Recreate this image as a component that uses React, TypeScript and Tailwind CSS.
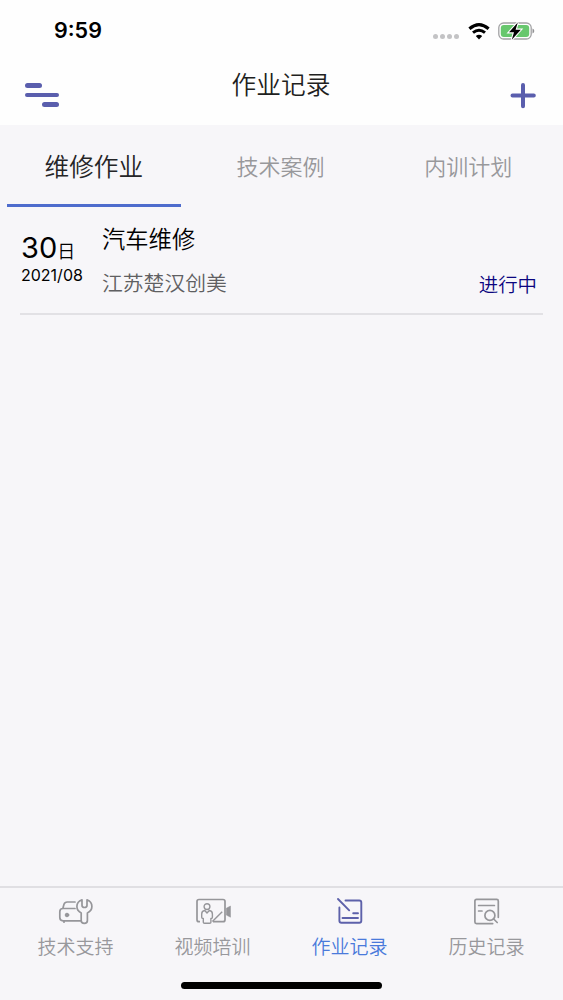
import type { ReactNode } from "react";

const tabs = [
  { label: "维修作业", active: true },
  { label: "技术案例", active: false },
  { label: "内训计划", active: false },
];

const records = [
  { day: "30", month: "2021/08", title: "汽车维修", company: "江苏楚汉创美", status: "进行中" },
];

function SupportIcon() {
  return (
    <svg width="36" height="30" viewBox="0 0 36 30" fill="none" stroke="#96969a" strokeWidth="1.7" strokeLinecap="round" strokeLinejoin="round">
      <path d="M17 5H9.2Q6.8 5 6 7.2L4.8 11.5M17 11.5H5Q1.8 11.5 1.8 14.7V20.6Q1.8 23.8 5 23.8H23M6 24v1.2" />
      <circle cx="9" cy="18" r="1.8" fill="#96969a" strokeWidth="1" />
      <path d="M24 2.8C20.8 4 18.9 6.6 18.9 9.4C18.9 12.4 20.6 14.5 23.2 15.9V23.4Q23.2 26.3 26.3 26.3Q29.4 26.3 29.4 23.4V15.9C32.2 14.5 33.9 12.3 33.9 9.4C33.9 6.5 32 4 29 2.8V8.2Q29 10.5 26.5 10.5Q24 10.5 24 8.2Z" />
    </svg>
  );
}

function VideoIcon() {
  return (
    <svg width="36" height="30" viewBox="0 0 36 30" fill="none" stroke="#96969a" strokeWidth="1.4" strokeLinejoin="round">
      <path d="M5 24.7H4Q2 24.7 2 22.7V4.5Q2 2.5 4 2.5H28Q30 2.5 30 4.5V22.7Q30 24.7 28 24.7H18" strokeWidth="1.7" />
      <path d="M31.3 11.2L35.5 9V20.2L31.3 18Z" fill="#96969a" strokeWidth=".5" />
      <circle cx="12" cy="9.6" r="2.9" />
      <path d="M9.8 13.5Q6.7 13.9 6.7 17V20.3Q6.7 21.5 8.3 21.5V25.3Q8.3 26.2 9.5 26.2H14.7Q15.9 26.2 15.9 25.3V21.5Q17.4 21.5 17.4 20.2V17Q17.4 13.9 14.3 13.5L12 16ZM17.4 24.4L27.2 14.7" />
    </svg>
  );
}

function RecordIcon() {
  return (
    <svg width="36" height="30" viewBox="0 0 36 30" fill="none" stroke="#5d61aa" strokeWidth="1.9" strokeLinecap="round" strokeLinejoin="round">
      <path d="M13.5 3.5H27.3Q29.3 3.5 29.3 5.5V23.7Q29.3 25.7 27.3 25.7H9.4Q7.4 25.7 7.4 23.7V10.5M6 2L17.2 13.3M21.2 16.3H26M10.5 21H26" />
    </svg>
  );
}

function HistoryIcon() {
  return (
    <svg width="36" height="30" viewBox="0 0 36 30" fill="none" stroke="#96969a" strokeWidth="1.7" strokeLinecap="round" strokeLinejoin="round">
      <path d="M23.7 26.6H7.5Q5.9 26.6 5.9 25V4Q5.9 2.4 7.5 2.4H27.7Q29.3 2.4 29.3 4V20.3M9.6 8.5H25.4M9.6 14H13" />
      <circle cx="20.9" cy="18.4" r="5" />
      <path d="M24.7 22L28.2 25.5" />
    </svg>
  );
}

const navItems: { label: string; icon: ReactNode; active?: boolean }[] = [
  { label: "技术支持", icon: <SupportIcon /> },
  { label: "视频培训", icon: <VideoIcon /> },
  { label: "作业记录", icon: <RecordIcon />, active: true },
  { label: "历史记录", icon: <HistoryIcon /> },
];

function StatusBar() {
  return (
    <div className="flex h-[62px] items-center justify-between pl-[54px] pr-[28px]">
      <span className="font-['Inter',sans-serif] text-[21.5px] font-semibold leading-none text-black">9:59</span>
      <div className="flex items-center">
        <div className="mr-[9px] mt-[11px] flex gap-[2px]">
          {[0, 1, 2, 3].map((dot) => (
            <span key={dot} className="size-[5px] rounded-full bg-[#c3c3c5]" />
          ))}
        </div>
        <svg width="22" height="17" viewBox="0 0 22 17" fill="none" stroke="#000" className="mr-[8px]">
          <path d="M1.4 5.8Q11-2.4 20.6 5.8" strokeWidth="3.1" />
          <path d="M5 9.7Q11 4.7 17 9.7" strokeWidth="3" />
          <path d="M11 16.4L7.8 13.1Q11 10.5 14.2 13.1Z" fill="#000" stroke="none" />
        </svg>
        <svg width="37" height="20" viewBox="0 0 37 20">
          <rect x=".8" y="2" width="32.4" height="16" rx="4.8" fill="#fff" stroke="#a2a2a4" strokeWidth="1.3" />
          <rect x="2.8" y="4" width="28.4" height="12" rx="3" fill="#67c76d" />
          <path d="M34.5 7.5Q36.3 8.2 36.3 10T34.5 12.5Z" fill="#929294" />
          <path d="M19.8 1.6L11 11.3H16L13.8 18.7L22.8 8.7H17.6Z" fill="#000" stroke="#fff" strokeWidth="2.2" paintOrder="stroke" />
        </svg>
      </div>
    </div>
  );
}

export default function App() {
  return (
    <div className="flex h-[1000px] w-[563px] flex-col bg-[#f7f6f9] font-['Noto_Sans_CJK_SC',sans-serif] font-[350]">
      <header className="h-[125px] bg-[#fefefe]">
        <StatusBar />
        <div className="grid grid-cols-3 items-start pl-[25px] pr-[26px]">
          <button aria-label="菜单" className="mt-[21px] flex w-[34px] flex-col gap-[5px]">
            <span className="h-[4.5px] w-[17px] rounded-full bg-[#5a5ead]" />
            <span className="h-[4.5px] w-[34px] rounded-full bg-[#5a5ead]" />
            <span className="h-[4.5px] w-[17px] self-end rounded-full bg-[#5a5ead]" />
          </button>
          <h1 className="mt-[3px] text-center text-[24.7px] font-[350] leading-[36px] text-[#1f1f21]">作业记录</h1>
          <button aria-label="新增" className="mt-[20px] justify-self-end">
            <svg width="27" height="27" viewBox="0 0 27 27" stroke="#5a5ead" strokeWidth="4" strokeLinecap="round">
              <path d="M13 3V24.3M2.5 13.5H23.8" />
            </svg>
          </button>
        </div>
      </header>

      {/* Category tabs */}
      <div className="grid h-[82px] grid-cols-3">
        {tabs.map((tab) => (
          <div key={tab.label} className="flex flex-col items-center justify-between px-[7px]">
            <span
              className={
                tab.active
                  ? "mt-[20px] text-[24.7px] leading-[40px] text-[#252527]"
                  : "mr-[2px] mt-[20px] text-[22px] leading-[40px] text-[#98989b]"
              }
            >
              {tab.label}
            </span>
            {tab.active && <span className="h-[3px] w-full bg-[#4e6ccd]" />}
          </div>
        ))}
      </div>

      {/* Record list */}
      <main className="flex-1 px-5">
        {records.map((record) => (
          <div key={record.title} className="flex h-[108px] border-b-2 border-[#e2e1e5]">
            <div className="w-[82px] pl-px pt-[25px] text-black">
              <div className="flex items-baseline leading-[32px]">
                <span className="font-['Inter',sans-serif] text-[29px] font-normal">{record.day}</span>
                <span className="text-[18px]">日</span>
              </div>
              <div className="-mt-[2px] font-['Inter',sans-serif] text-[16px] font-normal leading-[22px]">{record.month}</div>
            </div>
            <div className="flex-1 pt-[13px]">
              <div className="text-[23.3px] leading-[36px] text-black">{record.title}</div>
              <div className="mt-[9px] text-[20.8px] leading-[34px] text-[#5f5f62]">{record.company}</div>
            </div>
            <span className="mr-[6px] mt-[62px] text-[19.4px] leading-[30px] text-[#0b0580]">{record.status}</span>
          </div>
        ))}
      </main>

      <footer className="flex h-[114px] flex-col items-center justify-between border-t-2 border-[#e0dfe3] pb-[11px]">
        <nav className="flex w-full pl-[7px] pr-[8px]">
          {navItems.map((item) => (
            <div key={item.label} className="flex flex-1 flex-col items-center pt-[9px]">
              {item.icon}
              <span
                className={
                  item.active
                    ? "mt-[5px] text-[19px] leading-[28px] text-[#4a7adb]"
                    : "mt-[5px] text-[19px] leading-[28px] text-[#98989c]"
                }
              >
                {item.label}
              </span>
            </div>
          ))}
        </nav>
        <div className="h-[7px] w-[201px] rounded-full bg-black" />
      </footer>
    </div>
  );
}
